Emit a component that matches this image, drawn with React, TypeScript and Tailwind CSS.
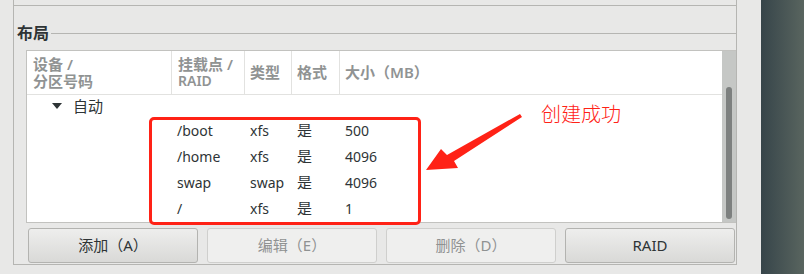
import React from 'react';

const font = { fontFamily: '"Noto Sans", "Noto Sans CJK SC", sans-serif' };

type Part = { mount: string; type: string; fmt: string; size: string };

const parts: Part[] = [
  { mount: '/boot', type: 'xfs', fmt: '是', size: '500' },
  { mount: '/home', type: 'xfs', fmt: '是', size: '4096' },
  { mount: 'swap', type: 'swap', fmt: '是', size: '4096' },
  { mount: '/', type: 'xfs', fmt: '是', size: '1' },
];

function Btn({ label, disabled }: { label: string; disabled?: boolean }) {
  return (
    <button
      className={`w-[170px] h-[35px] rounded-[3px] border text-[15px] flex items-center justify-center ${
        disabled
          ? 'border-[#cfcfcd] bg-[#efefee] text-[#8f9292]'
          : 'border-[#b3b3b0] bg-gradient-to-b from-[#eeeeed] to-[#d9d9d7] text-[#2e3436]'
      }`}
    >
      {label}
    </button>
  );
}

export default function App() {
  return (
    <div className="w-[804px] h-[274px] bg-[#e8e8e7] flex overflow-hidden" style={font}>
      {/* left gutter */}
      <div className="w-[13px] shrink-0" />

      {/* main panel */}
      <div className="relative w-[724px] h-[265px] border-l border-r border-b border-[#b5b5b2] flex flex-col shrink-0">
        <div className="h-[6px] border-b border-[#b5b5b2] shrink-0" />

        {/* frame label */}
        <div className="mt-[19px] h-[16px] flex items-center shrink-0 pl-[3px]">
          <span className="text-[16px] font-bold text-[#2e3436] leading-none">布局</span>
          <div className="flex-1 h-px bg-[#b5b5b2] ml-[2px]" />
        </div>

        {/* tree view */}
        <div className="mt-[9px] ml-[12px] h-[173px] border-l border-t border-b border-[#c2c2bf] bg-white flex shrink-0">
          <div className="flex-1 flex flex-col">
            {/* header */}
            <div className="h-[44px] border-b border-[#e2e2e0] flex text-[15px] font-semibold text-[#909393]">
              <div className="w-[145px] border-r border-[#e2e2e0] pl-[6px] flex flex-col justify-center gap-px">
                <span className="leading-[16px]">设备 /</span>
                <span className="leading-[16px]">分区号码</span>
              </div>
              <div className="w-[73px] border-r border-[#e2e2e0] pl-[6px] flex flex-col justify-center gap-px">
                <span className="leading-[16px]">挂载点 /</span>
                <span className="leading-[16px] text-[14px]">RAID</span>
              </div>
              <div className="w-[47px] border-r border-[#e2e2e0] pl-[5px] flex items-center">类型</div>
              <div className="w-[48px] border-r border-[#e2e2e0] pl-[5px] flex items-center">格式</div>
              <div className="flex-1 pl-[5px] flex items-center">大小（MB）</div>
            </div>

            {/* body */}
            <div className="flex flex-col text-[14px] text-[#2e3436]">
              <div className="h-[22px] flex items-center">
                <span className="ml-[25px] w-0 h-0 border-l-[5px] border-r-[5px] border-t-[6px] border-l-transparent border-r-transparent border-t-[#2e3436]" />
                <span className="ml-[11px] text-[15px]">自动</span>
              </div>
              {parts.map((p) => (
                <div key={p.mount} className="h-[26px] flex items-center">
                  <span className="w-[145px]" />
                  <span className="w-[73px] pl-[5px]">{p.mount}</span>
                  <span className="w-[47px] pl-[5px]">{p.type}</span>
                  <span className="w-[48px] pl-[5px] text-[15px]">{p.fmt}</span>
                  <span className="pl-[5px]">{p.size}</span>
                </div>
              ))}
            </div>
          </div>

          {/* scrollbar */}
          <div className="w-[14px] bg-[#c5c7c5] flex justify-center">
            <div className="mt-[36px] w-[6px] h-[132px] rounded-full bg-[#7d807f]" />
          </div>
        </div>

        {/* buttons */}
        <div className="mt-[5px] ml-[14px] flex gap-[9px] shrink-0">
          <Btn label="添加（A）" />
          <Btn label="编辑（E）" disabled />
          <Btn label="删除（D）" disabled />
          <Btn label="RAID" />
        </div>

        {/* annotation overlay */}
        <div className="absolute left-[135px] top-[117px] w-[272px] h-[108px] border-[3.5px] border-[#ff2216] rounded-[5px]" />
        <svg className="absolute left-[400px] top-[100px]" width="130" height="80" viewBox="0 0 130 80">
          <polygon points="106,14 108,17 40,61 44,68 12,70 27,49 33,55" fill="#ff2216" />
        </svg>
        <span className="absolute left-[527px] top-[104px] text-[20px] text-[#ff2216] leading-none" style={{ fontFamily: '"Noto Sans CJK SC", sans-serif', fontWeight: 300 }}>
          创建成功
        </span>
      </div>

      <div className="w-[24px] shrink-0" />
      <div className="flex-1 bg-gradient-to-r from-[#37454a] to-[#59655f]" />
    </div>
  );
}
